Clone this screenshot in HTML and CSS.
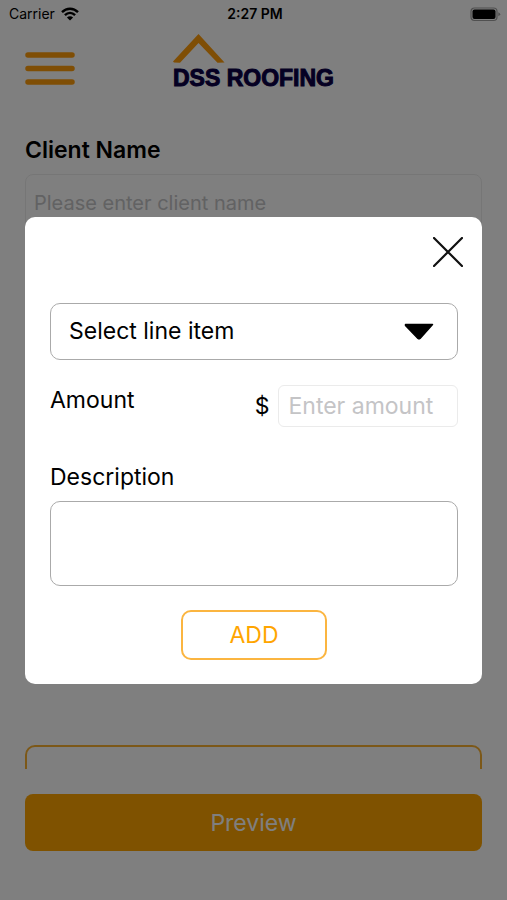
FILE: index.html
```html
<!DOCTYPE html>
<html lang="en">
<head>
<meta charset="utf-8">
<meta name="viewport" content="width=device-width, initial-scale=1">
<title>DSS Roofing</title>
<link rel="stylesheet" href="styles.css">
</head>
<body>
<div class="app">
  <div class="status">
    <div class="carrier">
      <span>Carrier</span>
      <svg width="18" height="14" viewBox="0 0 18 14" aria-hidden="true">
        <g fill="none" stroke="#000" stroke-width="2.4">
          <path d="M1 5.2C5.6.6 12.4.6 17 5.2"/>
          <path d="M3.9 8.2C6.9 5.3 11.1 5.3 14.1 8.2"/>
        </g>
        <path d="M9 13.6L5.9 10.5C7.6 8.9 10.4 8.9 12.1 10.5Z"/>
      </svg>
    </div>
    <span class="clock">2:27 PM</span>
    <svg class="battery" width="31" height="15" viewBox="0 0 31 15" aria-hidden="true">
      <rect x="1" y="1" width="26" height="12.500" rx="3.500" fill="none" stroke="#a0a0a0" stroke-width="1.200"/>
      <rect x="2.500" y="2.500" width="23" height="9.500" rx="2"/>
      <path d="M28.300 5.200Q30.200 6 30.200 7.200T28.300 9.300Z" fill="#a0a0a0"/>
    </svg>
  </div>
  <header class="header">
    <button class="menu" type="button" aria-label="Menu">
      <svg width="50" height="34" viewBox="0 0 50 34" aria-hidden="true">
        <path d="M3 3H47M3 16.500H47M3 30H47" stroke="#ff9c0a" stroke-width="5.500" stroke-linecap="round"/>
      </svg>
    </button>
    <div class="logo">
      <svg width="52" height="30" viewBox="0 0 52 30" aria-hidden="true">
        <path d="M0 27.500L25.500 0L51.500 28.500L44.500 28.800L25.500 9L7 28.800L1 28.500Z" fill="#ff9c0a"/>
      </svg>
      <span class="brand">DSS ROOFING</span>
    </div>
  </header>
  <main class="form">
    <label class="form-label" for="client">Client Name</label>
    <input class="client" id="client" type="text" placeholder="Please enter client name">
    <div class="items"></div>
    <button class="outline" type="button" aria-label="Add line item"></button>
  </main>
  <footer class="footer">
    <button class="preview" type="button">Preview</button>
  </footer>
</div>
<div class="overlay">
  <form class="modal" role="dialog" aria-modal="true" aria-label="Line item">
    <div class="modal-head">
      <button class="close" type="button" aria-label="Close">
        <svg width="30" height="30" viewBox="0 0 30 30" aria-hidden="true">
          <path d="M1 1L29 29M29 1L1 29" stroke="#111" stroke-width="2.200" stroke-linecap="round"/>
        </svg>
      </button>
    </div>
    <div class="picker">
      <select class="select" aria-label="Line item">
        <option>Select line item</option>
      </select>
      <svg class="caret" width="30" height="17" viewBox="0 0 30 17" aria-hidden="true">
        <path d="M1.500 1.500H28.500L16 15.500Q15 16.200 14 15.500L1.500 2.500Z" stroke="#000" stroke-width="1.500" stroke-linejoin="round"/>
      </svg>
    </div>
    <div class="amount-row">
      <label class="label" for="amount">Amount</label>
      <span class="dollar">$</span>
      <input class="amount" id="amount" type="text" placeholder="Enter amount">
    </div>
    <label class="label" for="description">Description</label>
    <textarea class="description" id="description"></textarea>
    <button class="add" type="button">ADD</button>
  </form>
</div>
</body>
</html>
```
FILE: styles.css
```css
* {
  box-sizing: border-box;
}

body {
  margin: 0;
  background: #fff;
  color: #000;
  font-family: Inter, "Liberation Sans", sans-serif;
  font-size: 23px;
  line-height: 30px;
}

button,
input,
select,
textarea {
  font: inherit;
  color: inherit;
  margin: 0;
}

button {
  padding: 0;
  border: 0;
  background: none;
}

svg {
  display: block;
}

.app {
  display: flex;
  flex-direction: column;
  height: 100vh;
}

.status {
  display: grid;
  grid-template-columns: 1fr auto 1fr;
  align-items: center;
  height: 28px;
  padding: 0 6px 0 9px;
  font-size: 14px;
  line-height: 20px;
}

.carrier {
  display: flex;
  align-items: center;
  gap: 6px;
}

.clock {
  font-weight: 600;
}

.battery {
  justify-self: end;
}

.header {
  display: grid;
  grid-template-columns: 1fr auto 1fr;
  align-items: start;
  padding: 6px 25px 0;
}

.menu {
  justify-self: start;
  padding-top: 18px;
}

.logo {
  display: flex;
  flex-direction: column;
}

.brand {
  color: #0a0046;
  font-family: "Liberation Sans", Arial, sans-serif;
  font-size: 23px;
  font-weight: 700;
  line-height: 28px;
  -webkit-text-stroke: 1px #0a0046;
}

.form {
  flex: 1;
  display: flex;
  flex-direction: column;
  min-height: 0;
  margin-top: 43px;
  padding: 0 25px;
  overflow: hidden;
}

.form-label {
  margin-bottom: 9px;
  font-weight: 600;
}

.client {
  flex: none;
  width: 100%;
  height: 57px;
  padding: 0 8px;
  border: 1px solid #ededed;
  border-radius: 8px;
  background: none;
  font-size: 20px;
}

::placeholder {
  color: #c4c4c6;
  opacity: 1;
}

.items {
  flex: 1;
}

.outline {
  flex: none;
  height: 57px;
  margin-bottom: -33px;
  border: 2px solid #f9b030;
  border-radius: 10px;
}

.footer {
  padding: 25px 25px 49px;
}

.preview {
  display: block;
  width: 100%;
  height: 57px;
  border-radius: 8px;
  background: #ffa500;
  color: #fff;
}

.overlay {
  position: fixed;
  inset: 0;
  display: flex;
  align-items: center;
  padding: 0 25px;
  background: rgba(0, 0, 0, 0.5);
}

.modal {
  display: flex;
  flex-direction: column;
  width: 100%;
  padding: 20px 24px 24px 25px;
  border-radius: 10px;
  background: #fff;
}

.modal-head {
  display: flex;
  justify-content: flex-end;
  margin: 0 -5px 36px 0;
}

.picker {
  position: relative;
}

.select {
  display: block;
  width: 100%;
  height: 57px;
  padding: 0 60px 0 18px;
  border: 1px solid #aaa;
  border-radius: 10px;
  background: #fff;
  appearance: none;
}

.caret {
  position: absolute;
  top: 20px;
  right: 24px;
  pointer-events: none;
}

.amount-row {
  display: flex;
  align-items: center;
  margin: 25px 0 35px;
}

.amount-row .label {
  flex: 1;
  align-self: flex-start;
}

.dollar {
  margin-right: 9px;
}

.amount {
  width: 44%;
  height: 42px;
  padding: 0 9px;
  border: 1px solid #ebebeb;
  border-radius: 6px;
}

.description {
  height: 85px;
  margin: 9px 0 24px;
  padding: 8px 12px;
  border: 1px solid #aaa;
  border-radius: 10px;
  resize: none;
}

.add {
  align-self: center;
  width: 36%;
  height: 50px;
  border: 2px solid #fbb540;
  border-radius: 10px;
  color: #ffa500;
}
```
